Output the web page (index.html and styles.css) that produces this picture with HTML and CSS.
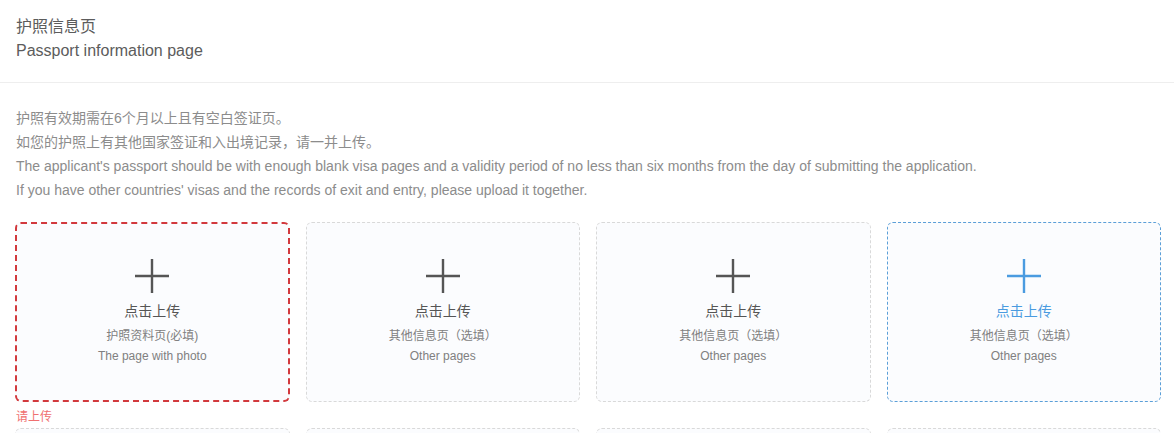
FILE: index.html
```html
<!DOCTYPE html>
<html lang="zh">
<head>
<meta charset="utf-8">
<title>护照信息页</title>
<link rel="stylesheet" href="styles.css">
</head>
<body>
<div class="page">
  <header class="head">
    <div class="head-cn">护照信息页</div>
    <div class="head-en">Passport information page</div>
  </header>
  <section class="content">
    <div class="notes">
      <p>护照有效期需在6个月以上且有空白签证页。</p>
      <p>如您的护照上有其他国家签证和入出境记录，请一并上传。</p>
      <p>The applicant's passport should be with enough blank visa pages and a validity period of no less than six months from the day of submitting the application.</p>
      <p>If you have other countries' visas and the records of exit and entry, please upload it together.</p>
    </div>
    <div class="grid">
      <div class="cell">
        <div class="card card-error">
          <svg class="plus" viewBox="0 0 34 34" width="34" height="34"><path d="M0 17H34M17 0V34" stroke="currentColor" stroke-width="2.4" fill="none"/></svg>
          <div class="card-title">点击上传</div>
          <div class="card-sub">护照资料页(必填)</div>
          <div class="card-sub">The page with photo</div>
        </div>
        <div class="tip">请上传</div>
      </div>
      <div class="cell">
        <div class="card">
          <svg class="plus" viewBox="0 0 34 34" width="34" height="34"><path d="M0 17H34M17 0V34" stroke="currentColor" stroke-width="2.4" fill="none"/></svg>
          <div class="card-title">点击上传</div>
          <div class="card-sub">其他信息页（选填）</div>
          <div class="card-sub">Other pages</div>
        </div>
        <div class="tip"></div>
      </div>
      <div class="cell">
        <div class="card">
          <svg class="plus" viewBox="0 0 34 34" width="34" height="34"><path d="M0 17H34M17 0V34" stroke="currentColor" stroke-width="2.4" fill="none"/></svg>
          <div class="card-title">点击上传</div>
          <div class="card-sub">其他信息页（选填）</div>
          <div class="card-sub">Other pages</div>
        </div>
        <div class="tip"></div>
      </div>
      <div class="cell">
        <div class="card card-active">
          <svg class="plus" viewBox="0 0 34 34" width="34" height="34"><path d="M0 17H34M17 0V34" stroke="currentColor" stroke-width="2.4" fill="none"/></svg>
          <div class="card-title">点击上传</div>
          <div class="card-sub">其他信息页（选填）</div>
          <div class="card-sub">Other pages</div>
        </div>
        <div class="tip"></div>
      </div>
      <div class="cell"><div class="card"></div></div>
      <div class="cell"><div class="card"></div></div>
      <div class="cell"><div class="card"></div></div>
      <div class="cell"><div class="card"></div></div>
    </div>
  </section>
</div>
</body>
</html>
```

FILE: styles.css
```css
html, body {
  margin: 0;
  padding: 0;
  background: #ffffff;
}
body {
  font-family: "Liberation Sans", Arial, "Noto Sans CJK SC", sans-serif;
  color: #555;
  overflow: hidden;
}
.page {
  width: 1174px;
}
.head {
  padding: 15px 16px 19px;
  border-bottom: 1px solid #eeeeee;
  font-size: 16px;
  line-height: 24px;
  color: #5c5c5c;
}
.content {
  padding: 23px 13px 0 15px;
}
.notes {
  padding-left: 1px;
  font-size: 14px;
  line-height: 24px;
  color: #8c8c8c;
}
.notes p {
  margin: 0;
}
.grid {
  margin-top: 20px;
  display: grid;
  grid-template-columns: repeat(4, 1fr);
  column-gap: 16px;
}
.cell {
  display: flex;
  flex-direction: column;
}
.card {
  box-sizing: border-box;
  height: 180px;
  border: 1px dashed #d9d9d9;
  border-radius: 6px;
  background: #fbfcfe;
  display: flex;
  flex-direction: column;
  align-items: center;
  padding-top: 36px;
  color: #555555;
}
.card-error {
  border: 2px dashed #d2393d;
  padding-top: 35px;
}
.card-active {
  border-color: #5b9fd8;
  color: #4a9be0;
}
.plus {
  display: block;
  color: #555555;
}
.card-active .plus {
  color: #4a9be0;
}
.card-title {
  margin-top: 8px;
  font-size: 14px;
  line-height: 20px;
  color: #555555;
}
.card-active .card-title {
  color: #4a9be0;
}
.card-title + .card-sub {
  margin-top: 5px;
}
.card-sub {
  font-size: 12px;
  line-height: 20px;
  color: #808080;
}
.tip {
  height: 26px;
  box-sizing: border-box;
  padding: 5px 0 0 1px;
  font-size: 12px;
  line-height: 20px;
  color: #f07070;
}
```
